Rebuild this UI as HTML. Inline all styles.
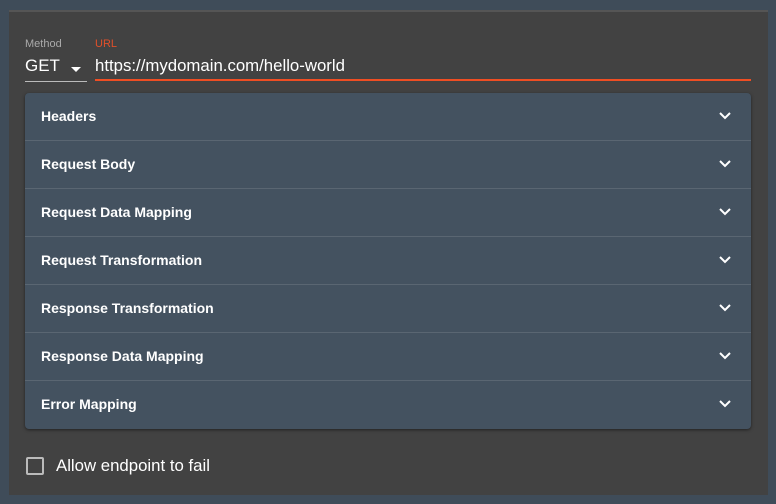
<!DOCTYPE html><html><head><style>
body{margin:0;width:776px;height:504px;background:#3f4c59;font-family:"Liberation Sans",sans-serif;overflow:hidden;position:relative}
.p{position:absolute;left:9px;top:10px;width:759px;height:483px;background:#424242;border-top:2px solid #555}
.lab{position:absolute;font-size:11px;top:26px}
.acc{position:absolute;left:16px;top:81px;width:726px;height:336px;background:#445260;border-radius:4px;box-shadow:0 1px 3px rgba(0,0,0,.5)}
.row{height:47px;border-bottom:1px solid #5a6672;position:relative;color:#fff;font-weight:bold;font-size:14px;line-height:47px;padding-left:16px}
.row:last-child{border-bottom:none}
.row svg{position:absolute;right:20px;top:19px}
</style></head><body>
<div class="p">
<div class="lab" style="left:16px;color:#aaa">Method</div>
<div class="lab" style="left:86px;color:#e0502a">URL</div>
<div style="position:absolute;left:16px;top:44px;color:#fff;font-size:17px">GET</div>
<div style="position:absolute;left:62px;top:55px;border:5px solid transparent;border-top:5px solid #fff;border-bottom:none"></div>
<div style="position:absolute;left:16px;top:69px;width:62px;height:1px;background:#bbb"></div>
<div style="position:absolute;left:86px;top:44px;color:#fff;font-size:16.8px">https://mydomain.com/hello-world</div>
<div style="position:absolute;left:86px;top:67px;width:656px;height:2px;background:#f04e23"></div>
<div class="acc">
<div class="row">Headers<svg width="12" height="8"><path d="M1 1l5 5 5-5" stroke="#fff" stroke-width="2" fill="none"/></svg></div>
<div class="row">Request Body<svg width="12" height="8"><path d="M1 1l5 5 5-5" stroke="#fff" stroke-width="2" fill="none"/></svg></div>
<div class="row">Request Data Mapping<svg width="12" height="8"><path d="M1 1l5 5 5-5" stroke="#fff" stroke-width="2" fill="none"/></svg></div>
<div class="row">Request Transformation<svg width="12" height="8"><path d="M1 1l5 5 5-5" stroke="#fff" stroke-width="2" fill="none"/></svg></div>
<div class="row">Response Transformation<svg width="12" height="8"><path d="M1 1l5 5 5-5" stroke="#fff" stroke-width="2" fill="none"/></svg></div>
<div class="row">Response Data Mapping<svg width="12" height="8"><path d="M1 1l5 5 5-5" stroke="#fff" stroke-width="2" fill="none"/></svg></div>
<div class="row">Error Mapping<svg width="12" height="8"><path d="M1 1l5 5 5-5" stroke="#fff" stroke-width="2" fill="none"/></svg></div>
</div>
<div style="position:absolute;left:17px;top:445px;width:14px;height:14px;border:2px solid #bbb;border-radius:2px"></div>
<div style="position:absolute;left:47px;top:444px;color:#fff;font-size:16.8px">Allow endpoint to fail</div>
</div>
</body></html>
